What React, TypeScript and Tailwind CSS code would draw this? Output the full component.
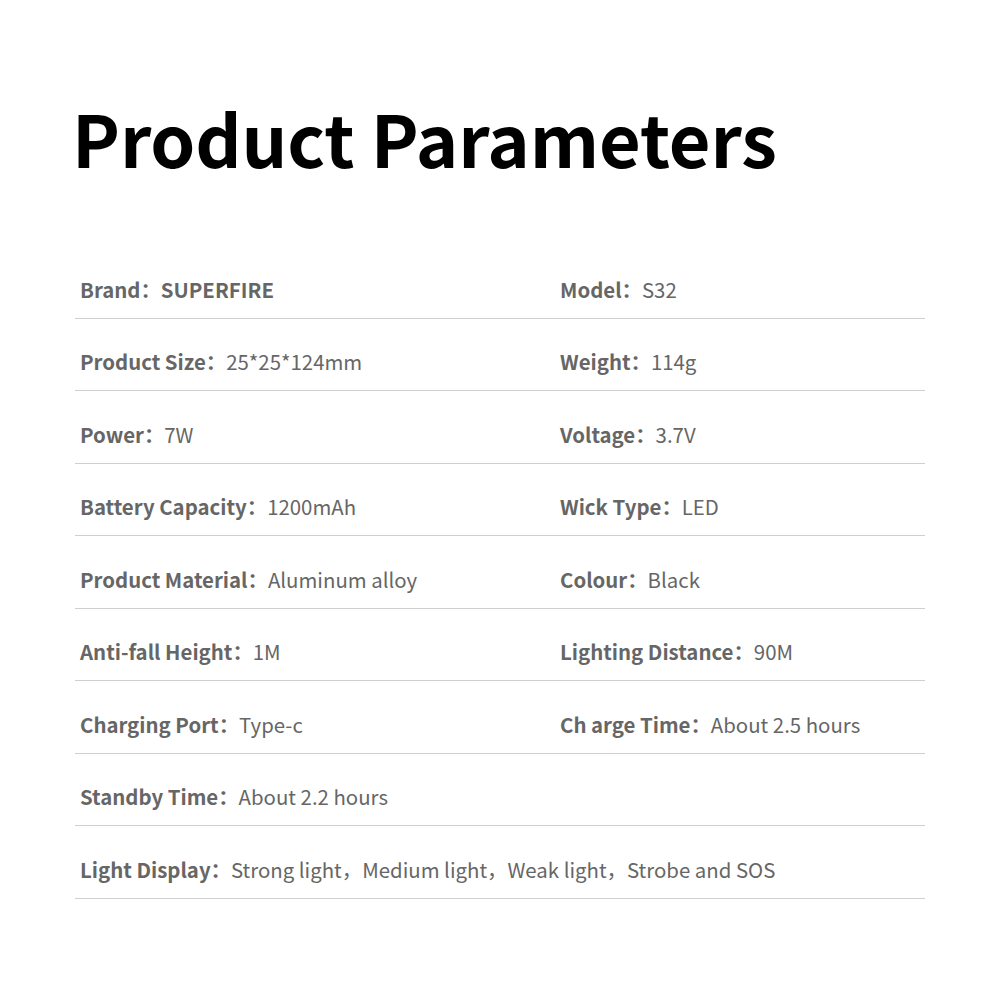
const rows: [string, string, string?, string?][] = [
  ['Brand', 'SUPERFIRE', 'Model', 'S32'],
  ['Product Size', '25*25*124mm', 'Weight', '114g'],
  ['Power', '7W', 'Voltage', '3.7V'],
  ['Battery Capacity', '1200mAh', 'Wick Type', 'LED'],
  ['Product Material', 'Aluminum alloy', 'Colour', 'Black'],
  ['Anti-fall Height', '1M', 'Lighting Distance', '90M'],
  ['Charging Port', 'Type-c', 'Ch arge Time', 'About 2.5 hours'],
  ['Standby Time', 'About 2.2 hours'],
  ['Light Display', 'Strong light，Medium light，Weak light，Strobe and SOS'],
];

function Cell({ label, value, bold }: { label?: string; value?: string; bold?: boolean }) {
  if (!label) return <div />;
  return (
    <div className="pl-[5px] whitespace-nowrap">
      <span className="font-bold">{label}：</span>
      <span className={bold ? 'font-bold' : 'font-normal'}>{value}</span>
    </div>
  );
}

export default function App() {
  return (
    <div
      className="w-[1000px] h-[1000px] bg-white overflow-hidden"
      style={{ fontFamily: '"Noto Sans CJK SC", "Noto Sans", sans-serif' }}
    >
      <h1 className="pl-[72px] pt-[87px] text-[72px] leading-[100px] font-bold text-black tracking-[-0.1px]">
        Product Parameters
      </h1>

      <div className="mx-[75px] mt-[59px]">
        {rows.map(([l1, v1, l2, v2], i) => (
          <div
            key={i}
            className="grid grid-cols-[480px_1fr] items-end h-[72.5px] pb-[14px] border-b border-[#cfcfcf] text-[20.4px] leading-[30px] text-[#666]"
          >
            <Cell label={l1} value={v1} bold={i === 0} />
            <Cell label={l2} value={v2} />
          </div>
        ))}
      </div>
    </div>
  );
}
